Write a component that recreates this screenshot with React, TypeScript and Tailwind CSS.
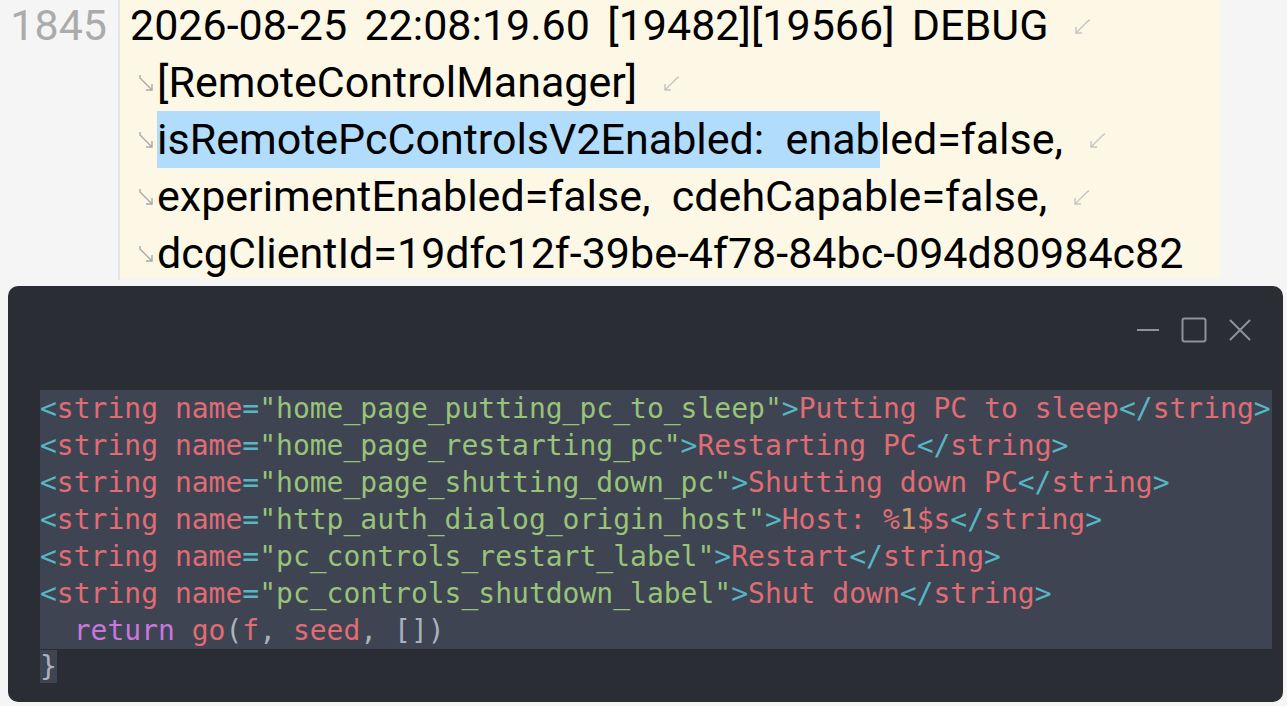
import React from 'react';

const logFont = { fontFamily: 'Roboto, "Liberation Sans", sans-serif' };
const monoFont = { fontFamily: '"DejaVu Sans Mono", "Liberation Mono", monospace' };

// continuation marker at the start of a wrapped line
function WrapStart() {
  return (
    <svg width="20" height="24" viewBox="0 0 20 24" className="shrink-0 -ml-[2px]">
      <path d="M3 4 L3 7 L15 19" fill="none" stroke="#a8a8a8" strokeWidth="1.4" />
      <path d="M9 19 L15 19 L15 13" fill="none" stroke="#a8a8a8" strokeWidth="1.4" />
    </svg>
  );
}

// soft-wrap marker at the end of a line
function WrapEnd() {
  return (
    <svg width="22" height="22" viewBox="0 0 22 22" className="inline-block shrink-0 ml-[24px] align-middle">
      <path d="M4 18 L15 7 Q17 5 18 5" fill="none" stroke="#c4c4c4" strokeWidth="1.4" />
      <path d="M4 12 L4 18 L10 18" fill="none" stroke="#c4c4c4" strokeWidth="1.4" />
    </svg>
  );
}

type Tok = [string, string];

const C = {
  tag: 'text-[#56b6c2]',
  name: 'text-[#e06c75]',
  val: 'text-[#98c379]',
  txt: 'text-[#e06c75]',
  num: 'text-[#d19a66]',
  kw: 'text-[#c678dd]',
  punc: 'text-[#abb2bf]',
};

function stringLine(key: string, body: Tok[]): Tok[] {
  return [
    ['<', C.tag],
    ['string', C.name],
    [' ', C.punc],
    ['name', C.name],
    ['=', C.tag],
    ['"' + key + '"', C.val],
    ['>', C.tag],
    ...body,
    ['</', C.tag],
    ['string', C.name],
    ['>', C.tag],
  ];
}

const code: Tok[][] = [
  stringLine('home_page_putting_pc_to_sleep', [['Putting PC to sleep', C.txt]]),
  stringLine('home_page_restarting_pc', [['Restarting PC', C.txt]]),
  stringLine('home_page_shutting_down_pc', [['Shutting down PC', C.txt]]),
  stringLine('http_auth_dialog_origin_host', [
    ['Host: %', C.txt],
    ['1', C.num],
    ['$s', C.txt],
  ]),
  stringLine('pc_controls_restart_label', [['Restart', C.txt]]),
  stringLine('pc_controls_shutdown_label', [['Shut down', C.txt]]),
  [
    ['  ', C.punc],
    ['return', C.kw],
    [' ', C.punc],
    ['go', C.name],
    ['(', C.punc],
    ['f', C.name],
    [', ', C.punc],
    ['seed', C.name],
    [', []', C.punc],
    [')', C.punc],
  ],
];

export default function App() {
  return (
    <div className="w-[1287px] h-[706px] bg-[#f5f5f5] overflow-hidden">
      {/* log view */}
      <div className="flex h-[280px]" style={logFont}>
        <div className="w-[118px] text-right pr-[11px] text-[#ababab] text-[43px] leading-[57px] -mt-[3px]">
          1845
        </div>
        <div className="w-[2px] bg-[#e6e6e6]" />
        <div className="w-[1100px] h-[278px] bg-[#fdf8e5] text-[43px] leading-[57px] text-black pl-[10px]">
          <div className="-mt-[3px]">
            <div className="flex items-center whitespace-pre [word-spacing:-2px]">
              <span>2026-08-25  22:08:19.60  [19482][19566]  DEBUG</span>
              <WrapEnd />
            </div>
            <div className="flex items-center pl-[9px] whitespace-pre">
              <WrapStart />
              <span>[RemoteControlManager]</span>
              <WrapEnd />
            </div>
            <div className="flex items-center pl-[9px] whitespace-pre">
              <WrapStart />
              <span className="bg-[#b2dcfb]">isRemotePcControlsV2Enabled:  enab</span>
              <span>led=false,</span>
              <WrapEnd />
            </div>
            <div className="flex items-center pl-[9px] whitespace-pre">
              <WrapStart />
              <span>experimentEnabled=false,  cdehCapable=false,</span>
              <WrapEnd />
            </div>
            <div className="flex items-center pl-[9px] whitespace-pre">
              <WrapStart />
              <span>dcgClientId=19dfc12f-39be-4f78-84bc-094d80984c82</span>
            </div>
          </div>
        </div>
      </div>

      {/* dark editor panel */}
      <div className="mx-[8px] mt-[6px] w-[1275px] h-[416px] rounded-[10px] bg-[#2a2d34] flex flex-col">
        <div className="flex justify-end items-start gap-[20px] pr-[30px] pt-[31px] h-[104px]">
          <svg width="26" height="26" viewBox="0 0 26 26">
            <path d="M2 13 H24" stroke="#8d929b" strokeWidth="2" />
          </svg>
          <svg width="26" height="26" viewBox="0 0 26 26">
            <rect x="1.5" y="1.5" width="23" height="23" rx="2" fill="none" stroke="#8d929b" strokeWidth="2" />
          </svg>
          <svg width="26" height="26" viewBox="0 0 26 26">
            <path d="M3 3 L23 23 M23 3 L3 23" stroke="#8d929b" strokeWidth="2" />
          </svg>
        </div>
        <div className="pl-[32px] text-[28px] leading-[37px]" style={monoFont}>
          <div className="w-[1232px] bg-[#3e4451]">
            {code.map((line, i) => (
              <div key={i} className="whitespace-pre h-[37px]">
                {line.map(([t, cls], j) => (
                  <span key={j} className={cls}>
                    {t}
                  </span>
                ))}
              </div>
            ))}
          </div>
          <div className="whitespace-pre h-[36px] leading-[36px]">
            <span className="bg-[#3e4451] text-[#abb2bf]">{'}'}</span>
          </div>
        </div>
      </div>
    </div>
  );
}
